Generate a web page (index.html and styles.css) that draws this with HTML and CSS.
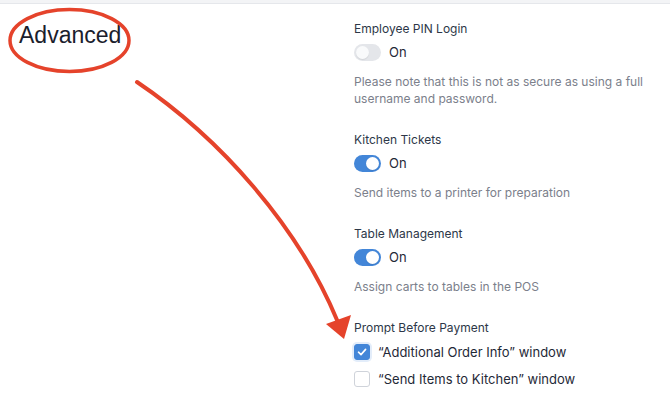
FILE: index.html
```html
<!DOCTYPE html>
<html lang="en">
<head>
  <meta charset="UTF-8">
  <meta name="viewport" content="width=device-width, initial-scale=1.0">
  <title>Advanced Settings</title>
  <link rel="stylesheet" href="styles.css">
</head>
<body>
  <div class="top-bar"></div>

  <div class="settings">
    <div class="settings-title">
      <h1>Advanced</h1>
    </div>

    <div class="settings-body">
      <div class="setting">
        <div class="setting-label">Employee PIN Login</div>
        <div class="toggle-row">
          <span class="toggle"></span>
          <span class="toggle-text">On</span>
        </div>
        <p class="setting-help">Please note that this is not as secure as using a full username and password.</p>
      </div>

      <div class="setting">
        <div class="setting-label">Kitchen Tickets</div>
        <div class="toggle-row">
          <span class="toggle on"></span>
          <span class="toggle-text">On</span>
        </div>
        <p class="setting-help">Send items to a printer for preparation</p>
      </div>

      <div class="setting">
        <div class="setting-label">Table Management</div>
        <div class="toggle-row">
          <span class="toggle on"></span>
          <span class="toggle-text">On</span>
        </div>
        <p class="setting-help">Assign carts to tables in the POS</p>
      </div>

      <div class="setting">
        <div class="setting-label">Prompt Before Payment</div>
        <div class="check-row">
          <span class="checkbox checked">
            <svg width="10" height="10" viewBox="0 0 10 10"><path d="M1.5 5.2 L4 7.6 L8.6 2.4" fill="none" stroke="#fff" stroke-width="1.6" stroke-linecap="round" stroke-linejoin="round"/></svg>
          </span>
          <span class="check-text">“Additional Order Info” window</span>
        </div>
        <div class="check-row">
          <span class="checkbox"></span>
          <span class="check-text">“Send Items to Kitchen” window</span>
        </div>
      </div>
    </div>
  </div>

  <!-- annotation drawn over the page -->
  <svg class="annotation" width="670" height="416" viewBox="0 0 670 416">
    <ellipse cx="69.5" cy="40.5" rx="59.5" ry="31" fill="none" stroke="#e5432b" stroke-width="3.5"/>
    <path d="M137 82 C 220 138 298 226 337 320" fill="none" stroke="#e5432b" stroke-width="4" stroke-linecap="round"/>
    <polygon points="326,324 351,315 344,339" fill="#e5432b"/>
  </svg>
</body>
</html>
```

FILE: styles.css
```css
body {
  margin: 0;
  font-family: Inter, 'Noto Sans', sans-serif;
  color: #1f2937;
  background: #fff;
}
.top-bar {
  height: 3px;
  background-color: #f3f4f6;
  border-bottom: 1px solid #e5e7eb;
}
.settings {
  display: grid;
  grid-template-columns: 354px 300px;
}
.settings-title h1 {
  margin: 0;
  padding: 17px 0 0 19px;
  font-family: 'Liberation Sans', Arial, sans-serif;
  font-size: 23px;
  font-weight: 400;
  line-height: 28px;
  color: #1a202c;
}
.settings-body {
  padding-top: 16px;
}
.setting {
  margin-bottom: 24px;
}
.setting-label {
  font-size: 12px;
  line-height: 18px;
  color: #2d3748;
}
.toggle-row {
  display: flex;
  align-items: center;
  gap: 8px;
  height: 18px;
  margin-top: 5px;
}
.toggle {
  position: relative;
  width: 27px;
  height: 17px;
  border-radius: 9px;
  background-color: #e4e6ea;
}
.toggle::after {
  content: "";
  position: absolute;
  top: 2px;
  left: 2px;
  width: 13px;
  height: 13px;
  border-radius: 50%;
  background-color: #f9fafb;
  box-shadow: 0 1px 1px rgba(0, 0, 0, 0.08);
}
.toggle.on {
  background-color: #4386d8;
}
.toggle.on::after {
  left: 12px;
  background-color: #fff;
}
.toggle-text {
  font-size: 13px;
  color: #1f2937;
}
.setting-help {
  margin: 12px 0 0;
  font-size: 12px;
  line-height: 17px;
  color: #7b808b;
}
.check-row {
  display: flex;
  align-items: center;
  gap: 8px;
  height: 22px;
  margin-top: 4px;
}
.check-row + .check-row {
  margin-top: 5px;
}
.checkbox {
  display: flex;
  align-items: center;
  justify-content: center;
  box-sizing: border-box;
  width: 16px;
  height: 16px;
  border: 1px solid #cfd3da;
  border-radius: 3px;
  background-color: #fff;
}
.checkbox.checked {
  border-color: #4386d8;
  background-color: #4386d8;
  box-shadow: 0 0 0 2px #e3edfa;
}
.check-text {
  font-size: 13px;
  color: #1f2937;
}
.annotation {
  position: absolute;
  top: 0;
  left: 0;
  pointer-events: none;
}
```
